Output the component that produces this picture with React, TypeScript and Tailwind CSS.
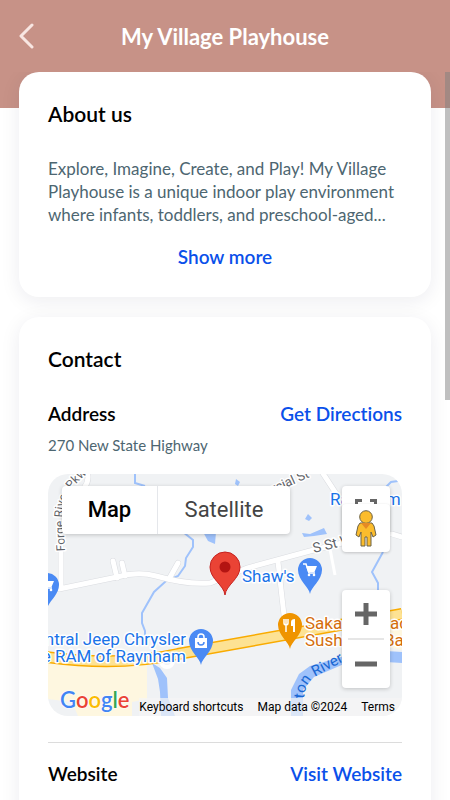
import React from "react";

const pinPath = "M0 24C-1 17 -12 10 -12 0A12 12 0 1 1 12 0C12 10 1 17 0 24Z";

const roads = [
  "M13 60V114",
  "M39 -2Q42 6 36 14",
  "M65 87L69 104",
  "M74 89L77 102",
  "M130 89L121 105",
  "M274 -2L291 24",
  "M230 88L237 150",
  "M11 115L69 103Q90 97 108 102Q140 111 162 109L199 94L262 77L330 60L344 60L354 63",
];

const Cart: React.FC = () => (
  <g>
    <path d="M-7 -6H-4L-1 3H5" fill="none" stroke="#fff" strokeWidth="1.5" />
    <path d="M-4 -4H7L4.500 2H-2Z" fill="#fff" />
    <circle cx="-1" cy="5" r="1.300" fill="#fff" />
    <circle cx="4" cy="5" r="1.300" fill="#fff" />
  </g>
);

const MapDrawing: React.FC = () => (
  <svg
    className="block h-full w-full font-['Roboto',sans-serif]"
    viewBox="0 0 354 242"
    preserveAspectRatio="xMidYMid slice"
    aria-hidden="true"
  >
    <rect width="354" height="242" fill="#f0f2f4" />
    <path d="M0 190H99V225L84 228V242H30L24 228L0 225Z" fill="#fef7e0" />
    <path d="M335 146L354 141V176L335 172Z" fill="#fef7e0" />

    {/* Water */}
    <g fill="none" stroke="#9fc2fb" strokeWidth="2">
      <path d="M87 0V9L97 12" />
      <path d="M135 58L145 66V73L138 84L137 92L130 102L118 107L106 118L94 139V149L97 157V162" />
      <path d="M335 78L324 98L330 109V122" />
      <path d="M350 7L343 8L336 15" />
    </g>
    <g fill="#9fc2fb">
      <path d="M104 189L112 194L119 204L120 224L127 242H113L112 218L110 205Z" />
      <path d="M155 58L160 67L167 70L168 58Z" />
      <path d="M260 40L264 44L261 47L257 45Z" />
      <path d="M254 59L262 60L276 54L279 60L266 62L256 63Z" />
      <path d="M188 5L192 8L190 12L187 10Z" />
      <path d="M243 242V216L251 200L262 192L296 182V190L266 203L255 216V242Z" />
      <path d="M338 177L354 178V189L338 188Z" />
    </g>

    {/* Roads */}
    <g fill="none" stroke="#dadce0" strokeWidth="6" strokeLinecap="round">
      {roads.map((d) => (
        <path key={d} d={d} />
      ))}
    </g>
    <g fill="none" stroke="#fff" strokeWidth="5" strokeLinecap="round">
      {roads.map((d) => (
        <path key={d} d={d} />
      ))}
    </g>
    <path d="M282 75L287 101" stroke="#fff" strokeWidth="3" />
    <circle cx="119" cy="187" r="6" fill="#f0f2f4" stroke="#fff" strokeWidth="4" />
    <path d="M-2 183Q70 193 130 180L354 140" fill="none" stroke="#f9ab00" strokeWidth="12" />
    <path d="M-2 183Q70 193 130 180L354 140" fill="none" stroke="#fde293" strokeWidth="9" />

    {/* Street names */}
    <path id="pkwy" d="M17 77L15 40Q16 18 38 1" fill="none" />
    <path id="river" d="M256 270V224Q257 209 268 202L296 187" fill="none" />
    <g fill="#5f6368" stroke="#fff" strokeWidth="3" paintOrder="stroke" strokeLinejoin="round">
      <text fontSize="12">
        <textPath href="#pkwy">Forge River Pkwy</textPath>
      </text>
      <text fontSize="13" textAnchor="end" transform="translate(262 3) rotate(-24)">
        Commercial St
      </text>
      <text fontSize="14" transform="translate(266 79) rotate(-14)">S St W</text>
    </g>
    <text fontSize="15" fill="#1967d2" textAnchor="end">
      <textPath href="#river" startOffset="100%">
        ton River
      </textPath>
    </text>

    {/* Places */}
    <g fontSize="17" stroke="#fff" strokeWidth="3" paintOrder="stroke" strokeLinejoin="round">
      <g fill="#1a73e8">
        <text x="282" y="31">Raynham</text>
        <text x="194" y="108">Shaw&apos;s</text>
        <text x="138" y="171" textAnchor="end">Central Jeep Chrysler</text>
        <text x="138" y="188" textAnchor="end">Dodge RAM of Raynham</text>
      </g>
      <g fill="#d56e0c">
        <text x="257" y="155">Saka</text>
        <text x="342" y="155">ad</text>
        <text x="257" y="172">Sushi</text>
        <text x="336" y="172">Bar</text>
      </g>
    </g>

    {/* Pins */}
    <g transform="translate(-1 111)">
      <path d={pinPath} fill="#4a8af4" />
      <Cart />
    </g>
    <g transform="translate(262 96)">
      <path d={pinPath} fill="#4a8af4" />
      <Cart />
    </g>
    <g transform="translate(153 167)">
      <path d={pinPath} fill="#4a8af4" />
      <path d="M-6 -3H6V7H-6Z" fill="#fff" />
      <path d="M-3 -3V-4A3 3 0 0 1 3 -4V-3" fill="none" stroke="#fff" strokeWidth="1.500" />
      <path d="M-3 1A3 3 0 0 0 3 1" fill="none" stroke="#4a8af4" strokeWidth="1.500" />
    </g>
    <g transform="translate(242 151)">
      <path d={pinPath} fill="#ef9400" />
      <path d="M-6 -6V-2Q-6 0 -4 0V7M-2 -6V-2Q-2 0 -4 0M-4 -6V0" fill="none" stroke="#fff" strokeWidth="1.500" />
      <path d="M5 7H3V1H1V-3Q1 -6 5 -6Z" fill="#fff" />
    </g>
    <g transform="translate(177 93)">
      <path
        d="M0 28C-1 18 -15 12 -15 0A15 15 0 1 1 15 0C15 12 1 18 0 28Z"
        fill="#ea4335"
        stroke="#c5221f"
      />
      <circle r="5.500" fill="#b31412" />
    </g>
  </svg>
);

const Pegman: React.FC = () => (
  <svg width="22" height="37" viewBox="0 0 22 37" aria-hidden="true">
    <g fill="#fbbc2c" stroke="#6b6248" strokeWidth="1">
      <path d="M5 13H17L19 16L21 25L18 27L16 22V36H12V27H10V36H6V22L4 27L1 25L3 16Z" />
      <circle cx="11" cy="7" r="6.300" />
    </g>
    <path d="M6 13H16L11 19Z" fill="#e58a25" />
  </svg>
);

const ContactMap: React.FC = () => (
  <div className="relative mt-[19px] h-[242px] overflow-hidden rounded-[20px] font-['Roboto',sans-serif]">
    <MapDrawing />

    <div className="absolute left-[14px] top-3 flex h-12 rounded-sm bg-white text-[22px] shadow-[0_1px_4px_rgba(0,0,0,0.2)]">
      <button type="button" className="w-24 border-r border-gray-200 pb-px font-medium text-black">
        Map
      </button>
      <button type="button" className="w-[132px] pb-px text-[#444]">
        Satellite
      </button>
    </div>

    <button
      type="button"
      aria-label="Toggle fullscreen view"
      className="absolute right-3 top-3 flex h-12 w-12 justify-center rounded-sm bg-white pt-[13px] shadow-[0_1px_4px_rgba(0,0,0,0.2)]"
    >
      <svg width="22" height="22" viewBox="0 0 22 22" fill="none" stroke="#666" strokeWidth="3" aria-hidden="true">
        <path d="M1.500 7V1.500H7M15 1.500H20.500V7M20.500 15V20.500H15M7 20.500H1.500V15" />
      </svg>
    </button>
    <button
      type="button"
      aria-label="Street View"
      className="absolute right-3 top-[30px] flex h-12 w-12 items-center justify-center rounded-sm bg-white shadow-[0_1px_3px_rgba(0,0,0,0.2)]"
    >
      <Pegman />
    </button>

    <div className="absolute right-3 top-[116px] w-12 rounded-sm bg-white shadow-[0_1px_4px_rgba(0,0,0,0.2)]">
      <button type="button" aria-label="Zoom in" className="flex h-12 w-full items-center justify-center">
        <svg width="22" height="22" viewBox="0 0 22 22" stroke="#666" strokeWidth="5" aria-hidden="true">
          <path d="M0 11H22M11 0V22" />
        </svg>
      </button>
      <div className="mx-1.5 h-0.5 bg-[#e6e6e6]" />
      <button type="button" aria-label="Zoom out" className="flex h-12 w-full items-center justify-center">
        <svg width="22" height="22" viewBox="0 0 22 22" stroke="#666" strokeWidth="5" aria-hidden="true">
          <path d="M0 11H22" />
        </svg>
      </button>
    </div>

    <a
      href="#google"
      className="absolute bottom-0 left-3 font-['Lato',sans-serif] text-[22px] leading-8 font-semibold [text-shadow:0_0_2px_#fff,0_0_2px_#fff]"
    >
      <span className="text-[#4285f4]">G</span>
      <span className="text-[#ea4335]">o</span>
      <span className="text-[#fbbc04]">o</span>
      <span className="text-[#4285f4]">g</span>
      <span className="text-[#34a853]">l</span>
      <span className="text-[#ea4335]">e</span>
    </a>
    <div className="absolute bottom-0 right-0 flex h-[18px] items-center gap-[14px] bg-[#f5f5f5]/70 pr-[7px] text-[12px] text-black">
      <button type="button">Keyboard shortcuts</button>
      <span>Map data ©2024</span>
      <a href="#terms">Terms</a>
    </div>
  </div>
);

const Card: React.FC<{ title: string; children: React.ReactNode }> = ({ title, children }) => (
  <section className="rounded-[20px] bg-white px-[29px] pt-7 pb-[26px] shadow-[0_4px_20px_rgba(20,30,70,0.08)]">
    <h2 className="text-[21px] leading-7 font-semibold text-black">{title}</h2>
    {children}
  </section>
);

const App: React.FC = () => {
  return (
    <div className="relative flex h-screen flex-col overflow-hidden bg-white font-['Lato',sans-serif] [font-variant-ligatures:none]">
      <header className="h-[108px] shrink-0 bg-[#c79287]">
        <div className="grid h-[72px] grid-cols-[56px_1fr_56px] items-center">
          <button type="button" aria-label="Back" className="pl-[19px]">
            <svg width="16" height="26" viewBox="0 0 16 26" fill="none" stroke="#f8e6e2" strokeWidth="3" strokeLinecap="round" strokeLinejoin="round" aria-hidden="true">
              <path d="M13 2L2 13L13 24" />
            </svg>
          </button>
          <h1 className="text-center text-[22px] font-bold text-white">My Village Playhouse</h1>
        </div>
      </header>

      <main className="-mt-9 flex min-h-0 flex-1 flex-col gap-5 overflow-y-auto px-[19px] [scrollbar-width:none]">
        <Card title="About us">
          <p className="mt-[29px] text-[17px] leading-[23px] text-[#4d6671]">
            Explore, Imagine, Create, and Play! My Village Playhouse is a unique indoor play environment where infants,
            toddlers, and preschool-aged...
          </p>
          <div className="mt-[17px] text-center">
            <button type="button" className="text-[19px] leading-7 font-semibold text-[#0a50ea]">
              Show more
            </button>
          </div>
        </Card>

        <Card title="Contact">
          <div className="mt-[27px] flex items-center justify-between text-[19px] leading-7 font-semibold">
            <h3 className="text-black">Address</h3>
            <a href="#directions" className="text-[#0a50ea]">
              Get Directions
            </a>
          </div>
          <p className="mt-[7px] text-[15px] leading-5 text-[#4d6671]">270 New State Highway</p>
          <ContactMap />
          <hr className="mt-[26px] border-[#dcdcdc]" />
          <div className="mt-[17px] flex items-center justify-between text-[19px] leading-7 font-semibold">
            <h3 className="text-black">Website</h3>
            <a href="#website" className="text-[#0a50ea]">
              Visit Website
            </a>
          </div>
          <p className="mt-[7px] text-[15px] leading-5 text-[#4d6671]">http://www.myvillageplayhouse.com/</p>
        </Card>
      </main>

      {/* Scroll indicator */}
      <div className="absolute top-[72px] right-0 h-[328px] w-[5px] bg-[#808080]/50" />
    </div>
  );
};

export default App;
